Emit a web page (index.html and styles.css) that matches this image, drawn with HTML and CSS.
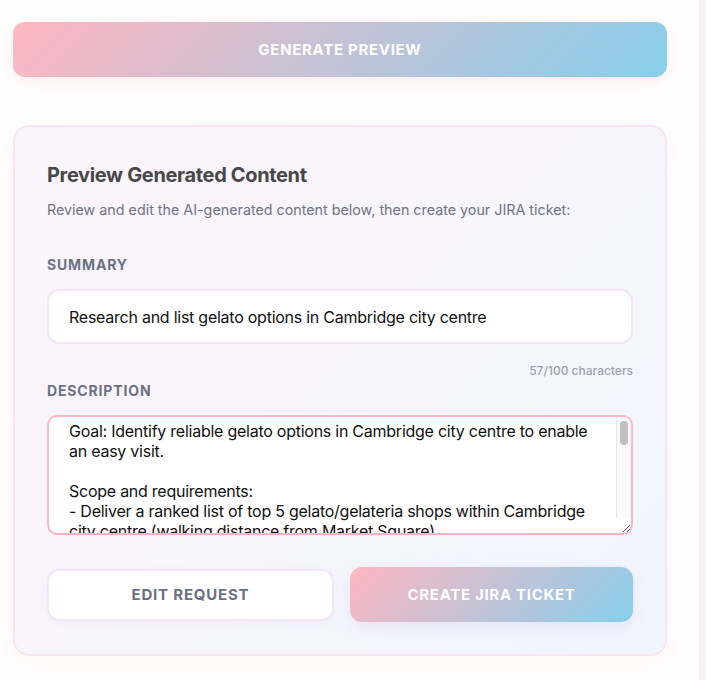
FILE: index.html
```html
<!DOCTYPE html>
<html lang="en">
<head>
<meta charset="utf-8">
<title>Preview Generated Content</title>
<link rel="stylesheet" href="styles.css">
</head>
<body>
<div class="layout">
  <main class="main">
    <button class="btn-gradient btn-generate" type="button">Generate Preview</button>

    <section class="card">
      <h2 class="card-title">Preview Generated Content</h2>
      <p class="card-sub">Review and edit the AI-generated content below, then create your JIRA ticket:</p>

      <label class="field-label" for="summary">Summary</label>
      <input id="summary" class="field-input" type="text" value="Research and list gelato options in Cambridge city centre">
      <div class="counter">57/100 characters</div>

      <label class="field-label" for="desc">Description</label>
      <div class="textarea-wrap">
        <textarea id="desc" class="field-textarea">Goal: Identify reliable gelato options in Cambridge city centre to enable an easy visit.

Scope and requirements:
- Deliver a ranked list of top 5 gelato/gelateria shops within Cambridge city centre (walking distance from Market Square).
- For each shop include: name, address, opening hours, price range and notable flavours.
- Note dietary options (vegan, dairy-free, gluten-free cones).

Acceptance criteria:
- List is shared in the ticket and verified against current online sources.</textarea>
        <div class="scrollbar" aria-hidden="true"><div class="scrollbar-thumb"></div></div>
      </div>

      <div class="actions">
        <button class="btn-outline" type="button">Edit Request</button>
        <button class="btn-gradient btn-create" type="button">Create JIRA Ticket</button>
      </div>
    </section>
  </main>
  <aside class="side"></aside>
</div>
</body>
</html>
```

FILE: styles.css
```css
* { box-sizing: border-box; }

html, body {
  margin: 0;
  padding: 0;
  height: 100%;
}

body {
  background: #fffefe;
  font-family: Inter, "Noto Sans", "Liberation Sans", sans-serif;
  color: #1f1f1f;
  overflow: hidden;
}

.layout {
  display: flex;
  min-height: 100%;
}

.main {
  width: 699px;
  flex: none;
  padding: 22px 32px 0 13px;
}

.side {
  flex: 1;
  background: #f6f2f5;
  border-left: 1px solid #f1ecef;
}

.btn-gradient {
  display: block;
  border: none;
  color: #ffffff;
  font-family: inherit;
  font-weight: 700;
  text-transform: uppercase;
  background: linear-gradient(135deg, #ffb6c1 0%, #87ceeb 100%);
  border-radius: 12px;
  cursor: pointer;
}

.btn-generate {
  width: 100%;
  height: 55px;
  font-size: 15px;
  letter-spacing: 0.7px;
  box-shadow: 0 4px 16px rgba(255, 182, 193, 0.28);
  margin-bottom: 48px;
}

.card {
  border: 2px solid #fbe4ef;
  border-radius: 16px;
  background: linear-gradient(135deg, #fcf4fc 0%, #f7f5fd 50%, #eff6fe 100%);
  padding: 32px;
  box-shadow: 0 10px 30px rgba(255, 182, 193, 0.12);
}

.card-title {
  margin: 0 0 11px;
  padding-top: 2px;
  font-size: 20px;
  line-height: 28px;
  font-weight: 700;
  letter-spacing: -0.35px;
  color: #474747;
}

.card-sub {
  margin: 0 0 37px;
  font-size: 14.3px;
  line-height: 20px;
  letter-spacing: 0;
  color: #6e7483;
}

.field-label {
  display: block;
  font-size: 14px;
  line-height: 16px;
  font-weight: 700;
  letter-spacing: 0.85px;
  text-transform: uppercase;
  color: #6b7183;
  margin-bottom: 16px;
}

.field-input {
  display: block;
  width: 100%;
  height: 55px;
  border: 2px solid #f4e4f8;
  border-radius: 12px;
  background: #ffffff;
  padding: 0 20px;
  font-family: inherit;
  font-size: 16px;
  letter-spacing: -0.25px;
  color: #111111;
  outline: none;
}

.counter {
  text-align: right;
  font-size: 12px;
  line-height: 16px;
  font-weight: 500;
  color: #9ea3ae;
  margin: 19px 0 4px;
}

.textarea-wrap {
  position: relative;
}

.field-textarea {
  display: block;
  width: 100%;
  height: 120px;
  border: 2px solid #ffb6c1;
  border-radius: 10px;
  background: #ffffff;
  padding: 4px 36px 16px 20px;
  font-family: inherit;
  font-size: 16px;
  line-height: 20px;
  letter-spacing: -0.25px;
  color: #111111;
  outline: none;
  resize: vertical;
  overflow: hidden;
}

.scrollbar {
  position: absolute;
  top: 2px;
  right: 2px;
  bottom: 17px;
  width: 15px;
  background: #fafafa;
  border-left: 1px solid #e6e6e6;
  border-top-right-radius: 8px;
  pointer-events: none;
}

.scrollbar-thumb {
  position: absolute;
  top: 4px;
  left: 3px;
  width: 8px;
  height: 24px;
  border-radius: 4px;
  background: #bfbfbf;
}

.actions {
  display: flex;
  gap: 16px;
  align-items: center;
  margin-top: 32px;
}

.btn-outline {
  flex: 1;
  height: 52px;
  border: 2px solid #f4e6f9;
  border-radius: 12px;
  background: #ffffff;
  font-family: inherit;
  font-size: 15px;
  font-weight: 700;
  letter-spacing: 0.8px;
  text-transform: uppercase;
  color: #6b7183;
  box-shadow: 0 2px 8px rgba(200, 180, 220, 0.1);
  cursor: pointer;
}

.btn-create {
  flex: 1;
  height: 55px;
  font-size: 15px;
  letter-spacing: 0.7px;
  box-shadow: 0 4px 14px rgba(200, 170, 210, 0.25);
}
```
